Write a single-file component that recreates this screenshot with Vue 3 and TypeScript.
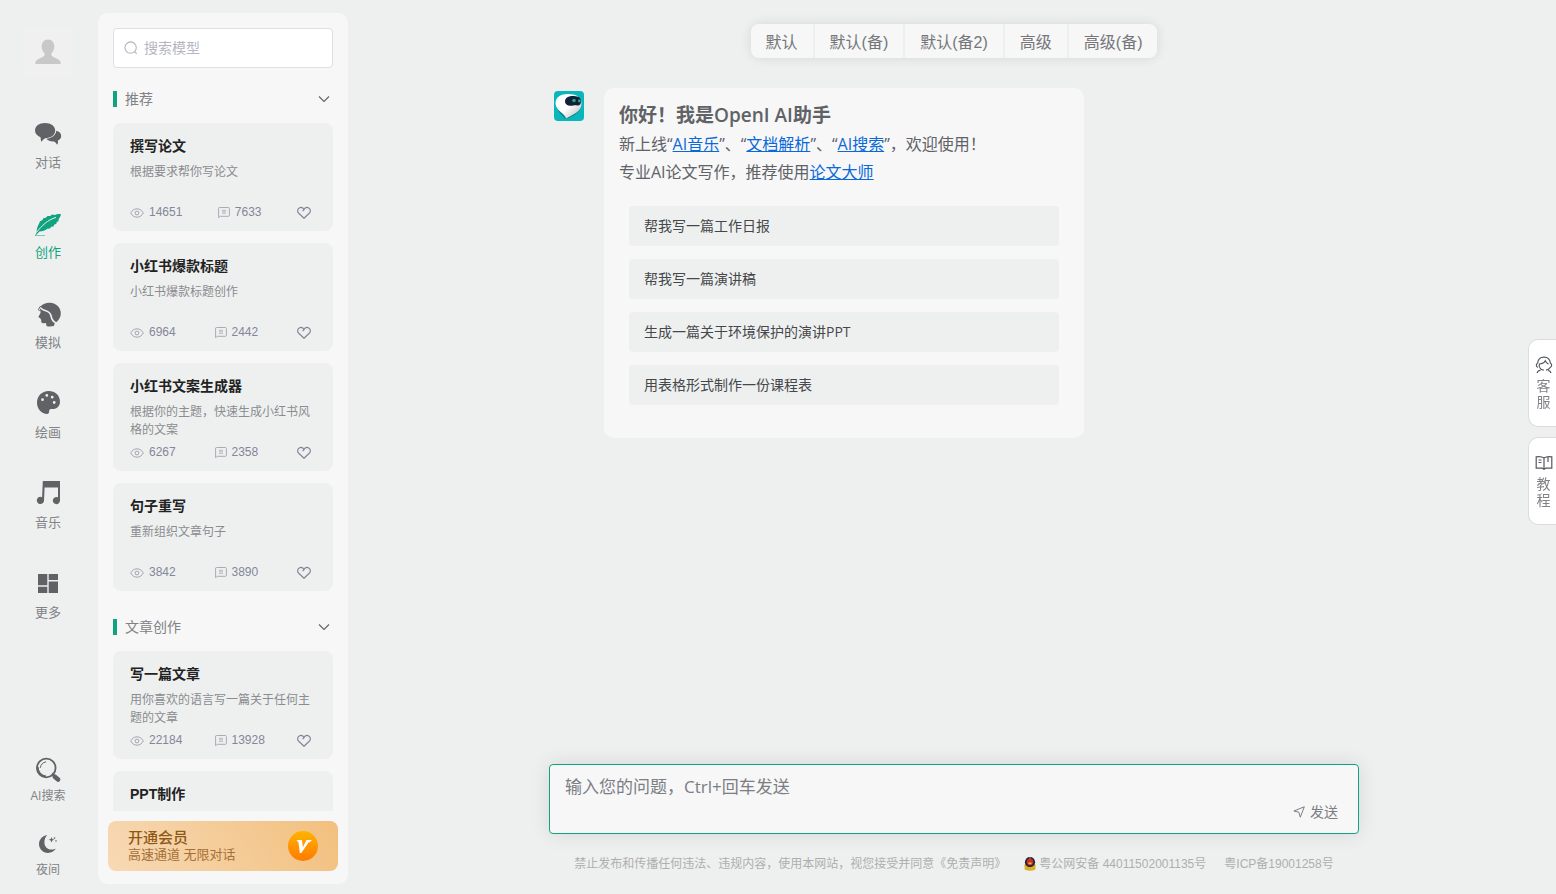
<script setup lang="ts">
import { ref } from 'vue'

interface ModelCard {
  title: string
  desc: string
  views?: string
  uses?: string
}
interface Section {
  name: string
  cards: ModelCard[]
}

const navItems = [
  { icon: 'chat', label: '对话' },
  { icon: 'feather', label: '创作' },
  { icon: 'head', label: '模拟' },
  { icon: 'palette', label: '绘画' },
  { icon: 'music', label: '音乐' },
  { icon: 'grid', label: '更多' },
]
const activeNav = ref('feather')

const sections: Section[] = [
  {
    name: '推荐',
    cards: [
      { title: '撰写论文', desc: '根据要求帮你写论文', views: '14651', uses: '7633' },
      { title: '小红书爆款标题', desc: '小红书爆款标题创作', views: '6964', uses: '2442' },
      { title: '小红书文案生成器', desc: '根据你的主题，快速生成小红书风格的文案', views: '6267', uses: '2358' },
      { title: '句子重写', desc: '重新组织文章句子', views: '3842', uses: '3890' },
    ],
  },
  {
    name: '文章创作',
    cards: [
      { title: '写一篇文章', desc: '用你喜欢的语言写一篇关于任何主题的文章', views: '22184', uses: '13928' },
      { title: 'PPT制作', desc: '' },
    ],
  },
]

const modes = ['默认', '默认(备)', '默认(备2)', '高级', '高级(备)']
const prompts = ['帮我写一篇工作日报', '帮我写一篇演讲稿', '生成一篇关于环境保护的演讲PPT', '用表格形式制作一份课程表']
const keyword = ref('')
const question = ref('')
</script>

<template>
  <div class="app">
    <nav class="rail">
      <button class="avatar" aria-label="用户">
        <svg width="48" height="48" viewBox="0 0 48 48">
          <path fill="#c8c8c8" d="M24 11.500c4 0 6.300 3 6.300 6.800 0 3-1.300 5.400-2.800 7-.5 2 .2 2.800 1.800 3.600l5.200 2.500c1.600.8 2.200 2 2.200 4.600H11.300c0-2.600.6-3.800 2.200-4.600l5.200-2.500c1.600-.8 2.300-1.600 1.800-3.600-1.500-1.600-2.800-4-2.800-7 0-3.800 2.300-6.800 6.300-6.800z" />
        </svg>
      </button>
      <div class="rail-main">
        <button
          v-for="item in navItems"
          :key="item.icon"
          class="rail-item"
          :class="{ active: item.icon === activeNav }"
          @click="activeNav = item.icon"
        >
          <svg width="28" height="28" viewBox="0 0 28 28" fill="currentColor">
            <template v-if="item.icon === 'chat'">
              <path d="M22.300 10.800c2.800.5 4.900 2.600 4.900 5.100 0 2-1.300 3.800-3.300 4.600.1 1.400.5 2.600-.8 4.200-.9-1.500-1.700-2.700-3.200-3.200-3 .3-5.800-.8-7.500-2.700 5-.1 9.300-3.500 9.900-8z" />
              <path d="M11 3c5.900 0 10.200 3 10.200 7.600 0 4.500-4.300 7.600-10 7.600-1.800 1.100-2.300 2-3.900 3.500-.7-1.500-.3-2.900-.9-4.400C3.300 16 1 13.700 1 10.600 1 6 5.200 3 11 3z" />
            </template>
            <template v-else-if="item.icon === 'feather'">
              <path d="M27 4.300c-.4 2-1.200 3.400-2.300 4.700l-.2 2.200-1.800.7-.4 2-2 .5-.8 2-2.300.4-1.200 1.700-2.700.2c-2.200 1.800-4.800 2.500-7.800 2.800l-1.700 1.800L1 26l1.600-3.400C2.700 19 3.400 16.300 5 13.800l1-2.600 2.200-1 1.200-2 2.400-.5 1.700-1.700 2.700.1 1.900-1.600 2.800.5C22.700 3.900 25 4 27 4.300z" />
              <path fill="none" stroke="#eef0ef" stroke-width="1" d="M2.600 22.300C8 15.500 13.500 10 22 7.400" />
              <path fill="none" stroke="currentColor" stroke-width="1" opacity=".5" d="M1 25.500h10" />
            </template>
            <template v-else-if="item.icon === 'head'">
              <path d="M6.500 6.500C9 3.800 12.400 2.600 16 2.800 22.300 3.100 26.800 7.500 26.800 13.300c0 3.700-1.800 6.900-4.600 8.900-2-1-3.400-2.900-4-5.200-.7-2.700-1.400-4.600-4-6C11.300 9.400 8 9.200 6.500 6.500z" />
              <path d="M5.800 8.100c1.700 2.300 4.300 2.700 7.200 4 2.500 1.200 3.100 3.200 3.700 5.600.6 2.300 2 4.300 4.100 5.600l-1 2.700c-2.400.6-5.400.7-7.300-.1l-.5-3c-1.400.2-3.200.7-4.300-.1-.8-.7-.2-1.700-.5-2.800-.3-1-1.100-1-.9-1.900-1.300-.4-2.200-.6-1.700-1.600l1.900-3.400c.2-1.700-.6-3-.7-5z" />
              <path fill="none" stroke="currentColor" stroke-width="1" d="M6.600 6 4.500 9.400l1 1.600" />
            </template>
            <path
              v-else-if="item.icon === 'palette'"
              fill-rule="evenodd"
              d="M14.600 1C21.300 1 26 5.600 26 11.600c0 3.500-2.300 7.400-6.500 7.400-2 0-3.600-.6-4.200 1.200-.5 1.500.2 3.200-2.100 3.800C7.300 23.500 3 18.900 3 12.700 3 6 8 1 14.600 1zM12.800 4a1.400 1.400 0 100 2.800 1.400 1.400 0 000-2.800zM18.200 5.800a1.400 1.400 0 100 2.800 1.400 1.400 0 000-2.800zM20.200 11.100a1.400 1.400 0 100 2.800 1.400 1.400 0 000-2.800zM8.500 8.300a1.400 1.400 0 100 2.800 1.400 1.400 0 000-2.800z"
            />
            <path
              v-else-if="item.icon === 'music'"
              d="M8.800 1H26v19.500a3.600 3.600 0 11-2-3.200V7.600H10.600L10 20.700a3.600 3.600 0 11-1.900-3.400z"
            />
            <path v-else d="M4 4h9.300v11.300H4zM14.700 4H24v6h-9.300zM14.700 11.600H24V23h-9.300zM4 16.700h9.300V23H4z" />
          </svg>
          <span>{{ item.label }}</span>
        </button>
      </div>
      <div class="rail-foot">
        <button class="rail-item small">
          <svg width="28" height="28" viewBox="0 0 28 28" fill="none" stroke="currentColor">
            <circle cx="12.300" cy="12" r="9.300" stroke-width="1.800" />
            <path d="M6.300 11.800c.4-3.200 2.600-5.500 5.800-6" stroke-width="1" />
            <path d="M3.600 11c-.4 5.500 3.900 9.400 8.400 9.600" stroke-width="2.200" />
            <path d="M18 17.500l2.800 2.700" stroke-width="2" />
            <path d="M20.800 20.800l3.300 2.800" stroke-width="4.600" stroke-linecap="round" />
          </svg>
          <span>AI搜索</span>
        </button>
        <button class="rail-item small">
          <svg width="28" height="28" viewBox="0 0 28 28" fill="currentColor">
            <path d="M13.300 5C8.500 5.700 5 9.500 5 14.100 5 19.200 9 23 14 23c3.400 0 6.300-1.700 8-4.400-1.400.8-2.600 1-3.900 1-4.600 0-7.700-3-7.700-7.200 0-3 1-5.500 2.900-7.400z" />
            <path d="M17.500 7l.8 2 2 .8-2 .8-.8 2-.8-2-2-.8 2-.8zM20.500 6.800l.4.900.9.300-.9.400-.4.900-.4-.9-.9-.4.900-.3zM22 10l1 .9-1 .9-1-.9z" />
          </svg>
          <span>夜间</span>
        </button>
      </div>
    </nav>

    <aside class="panel">
      <label class="search">
        <svg width="14" height="14" viewBox="0 0 14 14" fill="none" stroke="#b0b4bd" stroke-width="1.100">
          <circle cx="6.600" cy="6.600" r="5.700" />
          <path d="M10.600 10.600l2.200 2.200" />
        </svg>
        <input v-model="keyword" type="text" placeholder="搜索模型" aria-label="搜索模型" />
      </label>
      <div class="list">
        <section v-for="sec in sections" :key="sec.name">
          <button class="section-head">
            <i class="bar"></i>
            <span>{{ sec.name }}</span>
            <svg width="12" height="8" viewBox="0 0 12 8" fill="none" stroke="#606266" stroke-width="1.100">
              <path d="M1 1.500l5 5 5-5" />
            </svg>
          </button>
          <article v-for="card in sec.cards" :key="card.title" class="card">
            <h3>{{ card.title }}</h3>
            <p>{{ card.desc }}</p>
            <div v-if="card.views" class="stats">
              <span class="stat">
                <svg width="14" height="12" viewBox="0 0 14 12" fill="none" stroke="#a3a6b0">
                  <path d="M.6 7C2.300 4.200 4.500 2.800 7 2.800S11.700 4.200 13.400 7C11.700 9.800 9.500 11.200 7 11.200S2.300 9.800.6 7z" />
                  <circle cx="7" cy="7" r="1.900" />
                </svg>
                {{ card.views }}
              </span>
              <span class="stat">
                <svg width="12" height="12" viewBox="0 0 12 12" fill="none" stroke="#a9acb6">
                  <path d="M.6 11.800V2.400q0-.9.900-.9h9q.9 0 .9.900v7q0 .9-.9.900H2.300z" />
                  <path d="M4 4.300h4M4 5.800h4M4 7.300h4" stroke-width=".8" />
                </svg>
                {{ card.uses }}
              </span>
              <button class="like" aria-label="收藏">
                <svg width="14" height="14" viewBox="0 0 14 14" fill="none" stroke="#84869a" stroke-width="1.200">
                  <path d="M7 13.300L1.500 8C.2 6.500.4 4.300 1.900 3.200 3.600 2.100 5.800 2.500 7 4.300 8.200 2.500 10.400 2.100 12.100 3.200c1.500 1.100 1.700 3.300.4 4.800z" />
                  <path d="M7 4.300L5.700 6.100" />
                </svg>
              </button>
            </div>
          </article>
        </section>
      </div>
      <button class="vip">
        <span class="vip-text">
          <strong>开通会员</strong>
          <span>高速通道 无限对话</span>
        </span>
        <svg width="30" height="30" viewBox="0 0 30 30">
          <defs>
            <linearGradient id="vip-disc" x1="0" y1="0" x2="0" y2="1">
              <stop offset="0" stop-color="#ffb400" />
              <stop offset="1" stop-color="#ff7a00" />
            </linearGradient>
          </defs>
          <circle cx="15" cy="15" r="15" fill="url(#vip-disc)" />
          <path fill="#fff" d="M8.500 9h5.400l1 7.300L18.500 9H24l-2.300 2.200h-1L13.300 22h-1.500L10.500 11.400z" />
        </svg>
      </button>
    </aside>

    <main class="main">
      <div class="modes">
        <button v-for="m in modes" :key="m">{{ m }}</button>
      </div>

      <div class="column">
        <div class="message">
          <svg class="bot" width="30" height="30" viewBox="0 0 30 30">
            <defs>
              <linearGradient id="bot-body" x1="0" y1="0" x2="1" y2="1">
                <stop offset=".5" stop-color="#fff" />
                <stop offset="1" stop-color="#b5b5b8" />
              </linearGradient>
            </defs>
            <rect width="30" height="30" rx="4" fill="#09b7bb" />
            <path fill="#087f86" d="M2.500 12C2.500 20 7 23 11.500 28c6-2 14-5 15.500-13z" />
            <path fill="url(#bot-body)" d="M14 3c8 0 13.500 3 13.500 9.500 0 8-8 11-15.500 15C11 22 1.500 20 1.500 12 1.500 6 7 3 14 3z" />
            <path fill="#10213f" d="M11 10.500C11 6.500 15 4.800 20 5c4.500.2 7 1.500 7 5.500 0 3.500-2 4.500-4.800 3.800-2.200-.6-3.200.8-6 .5-3-.3-5.200-1.500-5.200-4.300z" />
            <circle cx="20" cy="9.500" r="1.800" fill="#2fa56c" />
            <circle cx="25.300" cy="10" r="1.400" fill="#2fa56c" />
          </svg>
          <div class="bubble">
            <h1>你好！我是<span>OpenI AI</span>助手</h1>
            <p>新上线“<a href="#music">AI音乐</a>”、“<a href="#doc">文档解析</a>”、“<a href="#search">AI搜索</a>”，欢迎使用！</p>
            <p>专业AI论文写作，推荐使用<a href="#paper">论文大师</a></p>
            <div class="prompts">
              <button v-for="p in prompts" :key="p">{{ p }}</button>
            </div>
          </div>
        </div>

        <div class="composer">
          <textarea v-model="question" rows="1" placeholder="输入您的问题，Ctrl+回车发送" aria-label="输入您的问题"></textarea>
          <button class="send">
            <svg width="12" height="12" viewBox="0 0 12 12" fill="none" stroke="#7b7e84" stroke-width="1">
              <path d="M.9 5L11.300.8 7.300 11.200 5.800 6.200z" />
            </svg>
            发送
          </button>
        </div>

        <footer class="foot">
          <a href="#terms">禁止发布和传播任何违法、违规内容，使用本网站，视您接受并同意《免责声明》</a>
          <a href="#police" class="police">
            <svg width="12" height="14" viewBox="0 0 12 14">
              <path fill="#d9ae28" d="M.3 8L2.500 6h7l2.200 2-.6 4.800Q6 14.800.9 12.800z" />
              <circle cx="6" cy="5.200" r="5.100" fill="#2a2440" />
              <circle cx="6" cy="5" r="3.200" fill="#d42b1e" />
              <path fill="#e9b93a" d="M6 .2l1 1.200H5zM4.500 5.600h3v1.600h-3z" />
              <path fill="none" stroke="#d9ae28" stroke-width="2.400" d="M1 10.600q5 2.400 10 0" />
            </svg>
            粤公网安备 44011502001135号
          </a>
          <a href="#icp">粤ICP备19001258号</a>
        </footer>
      </div>
    </main>

    <div class="side">
      <button>
        <svg width="18" height="18" viewBox="0 0 18 18" fill="none" stroke="#55585e" stroke-width="1.200">
          <path d="M2.800 11.500C1 10.500.8 8 2.600 7.200 3 3.500 5.500 1.200 9 1.200s6 2.300 6.400 6c1.800.8 1.600 3.300-.2 4.300-.9 1.500-2.200 2.300-4.200 2.600" />
          <path d="M4.600 11.500C4 10 4 9 4.500 8c3-.2 4.800-1.200 5.800-3.200.8 1.800 1.800 2.800 3.200 3.300" />
          <path d="M4.600 11.500c.8 1.500 2.200 2.500 4.200 2.600M2 17c.5-1.600 1.800-2.500 3.600-2.800M16 17c-.5-1.400-1.400-2.300-2.800-2.700" />
        </svg>
        <span>客服</span>
      </button>
      <button>
        <svg width="18" height="18" viewBox="0 0 18 18" fill="none" stroke="#55585e" stroke-width="1.200">
          <path d="M9 4C7 2.600 4 2.300 1.200 2.800v11.400h6L9 15.400l1.800-1.200h6V2.800C14 2.300 11 2.600 9 4zM9 4v11" />
          <path d="M3.500 6H6.500M3.500 8.500H6.500M13 3v5" />
        </svg>
        <span>教程</span>
      </button>
    </div>
  </div>
</template>

<style>
body {
  margin: 0;
  background: #eef0ef;
}
</style>

<style scoped>
.app {
  display: flex;
  height: 100vh;
  overflow: hidden;
  background: #eef0ef;
  color: #606266;
  font-family: 'Open Sans', 'Noto Sans CJK SC', sans-serif;
}
.app * {
  box-sizing: border-box;
}
button {
  margin: 0;
  padding: 0;
  border: 0;
  background: none;
  color: inherit;
  font: inherit;
  cursor: pointer;
}
svg {
  display: block;
  flex: none;
}
h1,
h3,
p {
  margin: 0;
}

.rail {
  flex: none;
  display: flex;
  flex-direction: column;
  align-items: center;
  width: 96px;
  padding: 28px 0 14px;
}
.avatar {
  background: #f0f0f0;
}
.rail-main {
  display: flex;
  flex-direction: column;
  gap: 38px;
  margin-top: 44px;
}
.rail-item {
  display: flex;
  flex-direction: column;
  align-items: center;
  gap: 4px;
  font-size: 13px;
  line-height: 20px;
  color: #606266;
}
.rail-item span {
  color: #808286;
}
.rail-item.active,
.rail-item.active span {
  color: #10a37f;
}
.rail-foot {
  display: flex;
  flex-direction: column;
  gap: 24px;
  margin-top: auto;
}
.rail-item.small {
  gap: 2px;
  font-size: 12px;
}

.panel {
  flex: none;
  display: flex;
  flex-direction: column;
  width: 250px;
  margin: 13px 4px 10px 2px;
  padding: 15px 10px 13px;
  border-radius: 10px;
  background: #f7f7f7;
}
.search {
  flex: none;
  display: flex;
  align-items: center;
  gap: 6px;
  height: 40px;
  margin: 0 5px 7px;
  padding: 0 10px;
  border: 1px solid #dcdfe6;
  border-radius: 4px;
  background: #fff;
}
.search input {
  flex: 1;
  min-width: 0;
  padding: 0 0 2px;
  border: 0;
  outline: 0;
  background: none;
  font: inherit;
  font-size: 14px;
}
.search input::placeholder {
  color: #b4b7bf;
}
.list {
  flex: 1;
  min-height: 0;
  overflow: hidden;
  padding: 0 5px;
}
.section-head {
  display: flex;
  align-items: center;
  width: 100%;
  height: 48px;
  padding-right: 3px;
  font-size: 14px;
  color: #808286;
  text-align: left;
}
.section-head span {
  flex: 1;
  padding-bottom: 2px;
}
.bar {
  width: 4px;
  height: 16px;
  margin-right: 8px;
  background: #10a37f;
}
.card {
  display: flex;
  flex-direction: column;
  height: 108px;
  margin-bottom: 12px;
  padding: 12px 17px 10px;
  border-radius: 8px;
  background: #eef0ef;
}
.card h3 {
  font-family: 'Liberation Sans', 'Noto Sans CJK SC', sans-serif;
  font-size: 14px;
  font-weight: 600;
  line-height: 22px;
  color: #222;
}
.card p {
  margin-top: 6px;
  font-size: 12px;
  line-height: 18px;
  color: #8a8c90;
}
.stats {
  display: flex;
  align-items: center;
  justify-content: space-between;
  height: 18px;
  margin-top: auto;
  padding-right: 5px;
  font-family: 'Liberation Sans', sans-serif;
  font-size: 12px;
  color: #84869a;
}
.stat {
  display: flex;
  align-items: center;
  gap: 5px;
}
.vip {
  flex: none;
  display: flex;
  align-items: center;
  justify-content: space-between;
  height: 50px;
  margin-top: 10px;
  padding: 0 20px;
  border-radius: 8px;
  background: linear-gradient(60deg, #f7d9b5, #f2c07e);
  color: #a56f35;
  text-align: left;
}
.vip-text {
  display: flex;
  flex-direction: column;
  font-size: 13px;
  line-height: 17px;
}
.vip strong {
  font-size: 15px;
  font-weight: 500;
  color: #8f5817;
}

.main {
  flex: 1;
  min-width: 0;
  display: flex;
  flex-direction: column;
  align-items: center;
  padding-top: 24px;
}
.modes {
  display: flex;
  border-radius: 8px;
  background: #f7f7f7;
  box-shadow: 0 0 12px rgba(0, 0, 0, 0.1);
}
.modes button {
  height: 34px;
  padding: 0 15px;
  border-right: 2px solid #eef0ef;
  font-family: 'Liberation Sans', 'Noto Sans CJK SC', sans-serif;
  font-size: 16px;
  color: #74767a;
}
.modes button:last-child {
  border-right: 0;
}
.column {
  flex: 1;
  display: flex;
  flex-direction: column;
  width: 100%;
  max-width: 810px;
  padding-top: 30px;
}
.message {
  display: flex;
  align-items: flex-start;
  gap: 20px;
  padding-left: 5px;
}
.bot {
  margin-top: 3px;
}
.bubble {
  width: 480px;
  padding: 12px 15px 33px;
  border-radius: 10px;
  background: #f7f7f7;
}
.bubble h1 {
  font-size: 19px;
  font-weight: 700;
  line-height: 30px;
}
.bubble h1 span {
  font-weight: 600;
}
.bubble p {
  font-size: 16px;
  line-height: 28px;
}
.bubble a {
  color: #0969da;
  text-decoration: underline;
}
.prompts {
  display: flex;
  flex-direction: column;
  gap: 13px;
  margin: 20px 10px 0;
}
.prompts button {
  height: 40px;
  padding: 0 15px 2px;
  border-radius: 4px;
  background: #eef0ef;
  color: #45474b;
  font-size: 14px;
  text-align: left;
}
.composer {
  display: flex;
  flex-direction: column;
  height: 70px;
  margin-top: auto;
  padding: 10px 20px 10px 15px;
  border: 1px solid #10a37f;
  border-radius: 4px;
  background: #f7f7f7;
  box-shadow: 0 0 20px rgba(0, 0, 0, 0.1);
}
.composer textarea {
  height: 24px;
  padding: 0;
  border: 0;
  outline: 0;
  resize: none;
  overflow: hidden;
  background: none;
  font: inherit;
  font-size: 17px;
  line-height: 24px;
}
.composer textarea::placeholder {
  color: #7b7e84;
}
.send {
  display: flex;
  align-items: center;
  align-self: flex-end;
  gap: 5px;
  margin-top: 2px;
  font-size: 14px;
  line-height: 22px;
  color: #7b7e84;
}
.foot {
  display: flex;
  justify-content: center;
  gap: 18px;
  padding: 20px 0;
  font-family: 'Liberation Sans', 'Noto Sans CJK SC', sans-serif;
  font-size: 12px;
  line-height: 20px;
}
.foot a {
  color: #aeaeae;
  text-decoration: none;
  white-space: nowrap;
}
.foot .police {
  display: flex;
  align-items: center;
  gap: 3px;
}

.side {
  position: fixed;
  top: 339px;
  right: 0;
  display: flex;
  flex-direction: column;
  gap: 10px;
}
.side button {
  display: flex;
  flex-direction: column;
  align-items: center;
  gap: 4px;
  width: 28px;
  height: 88px;
  padding: 16px 0 0 2px;
  border: 1px solid #dcdcdc;
  border-right: 0;
  border-radius: 10px 0 0 10px;
  background: #fff;
}
.side span {
  width: 14px;
  font-size: 14px;
  line-height: 16px;
  color: #808286;
}
</style>
